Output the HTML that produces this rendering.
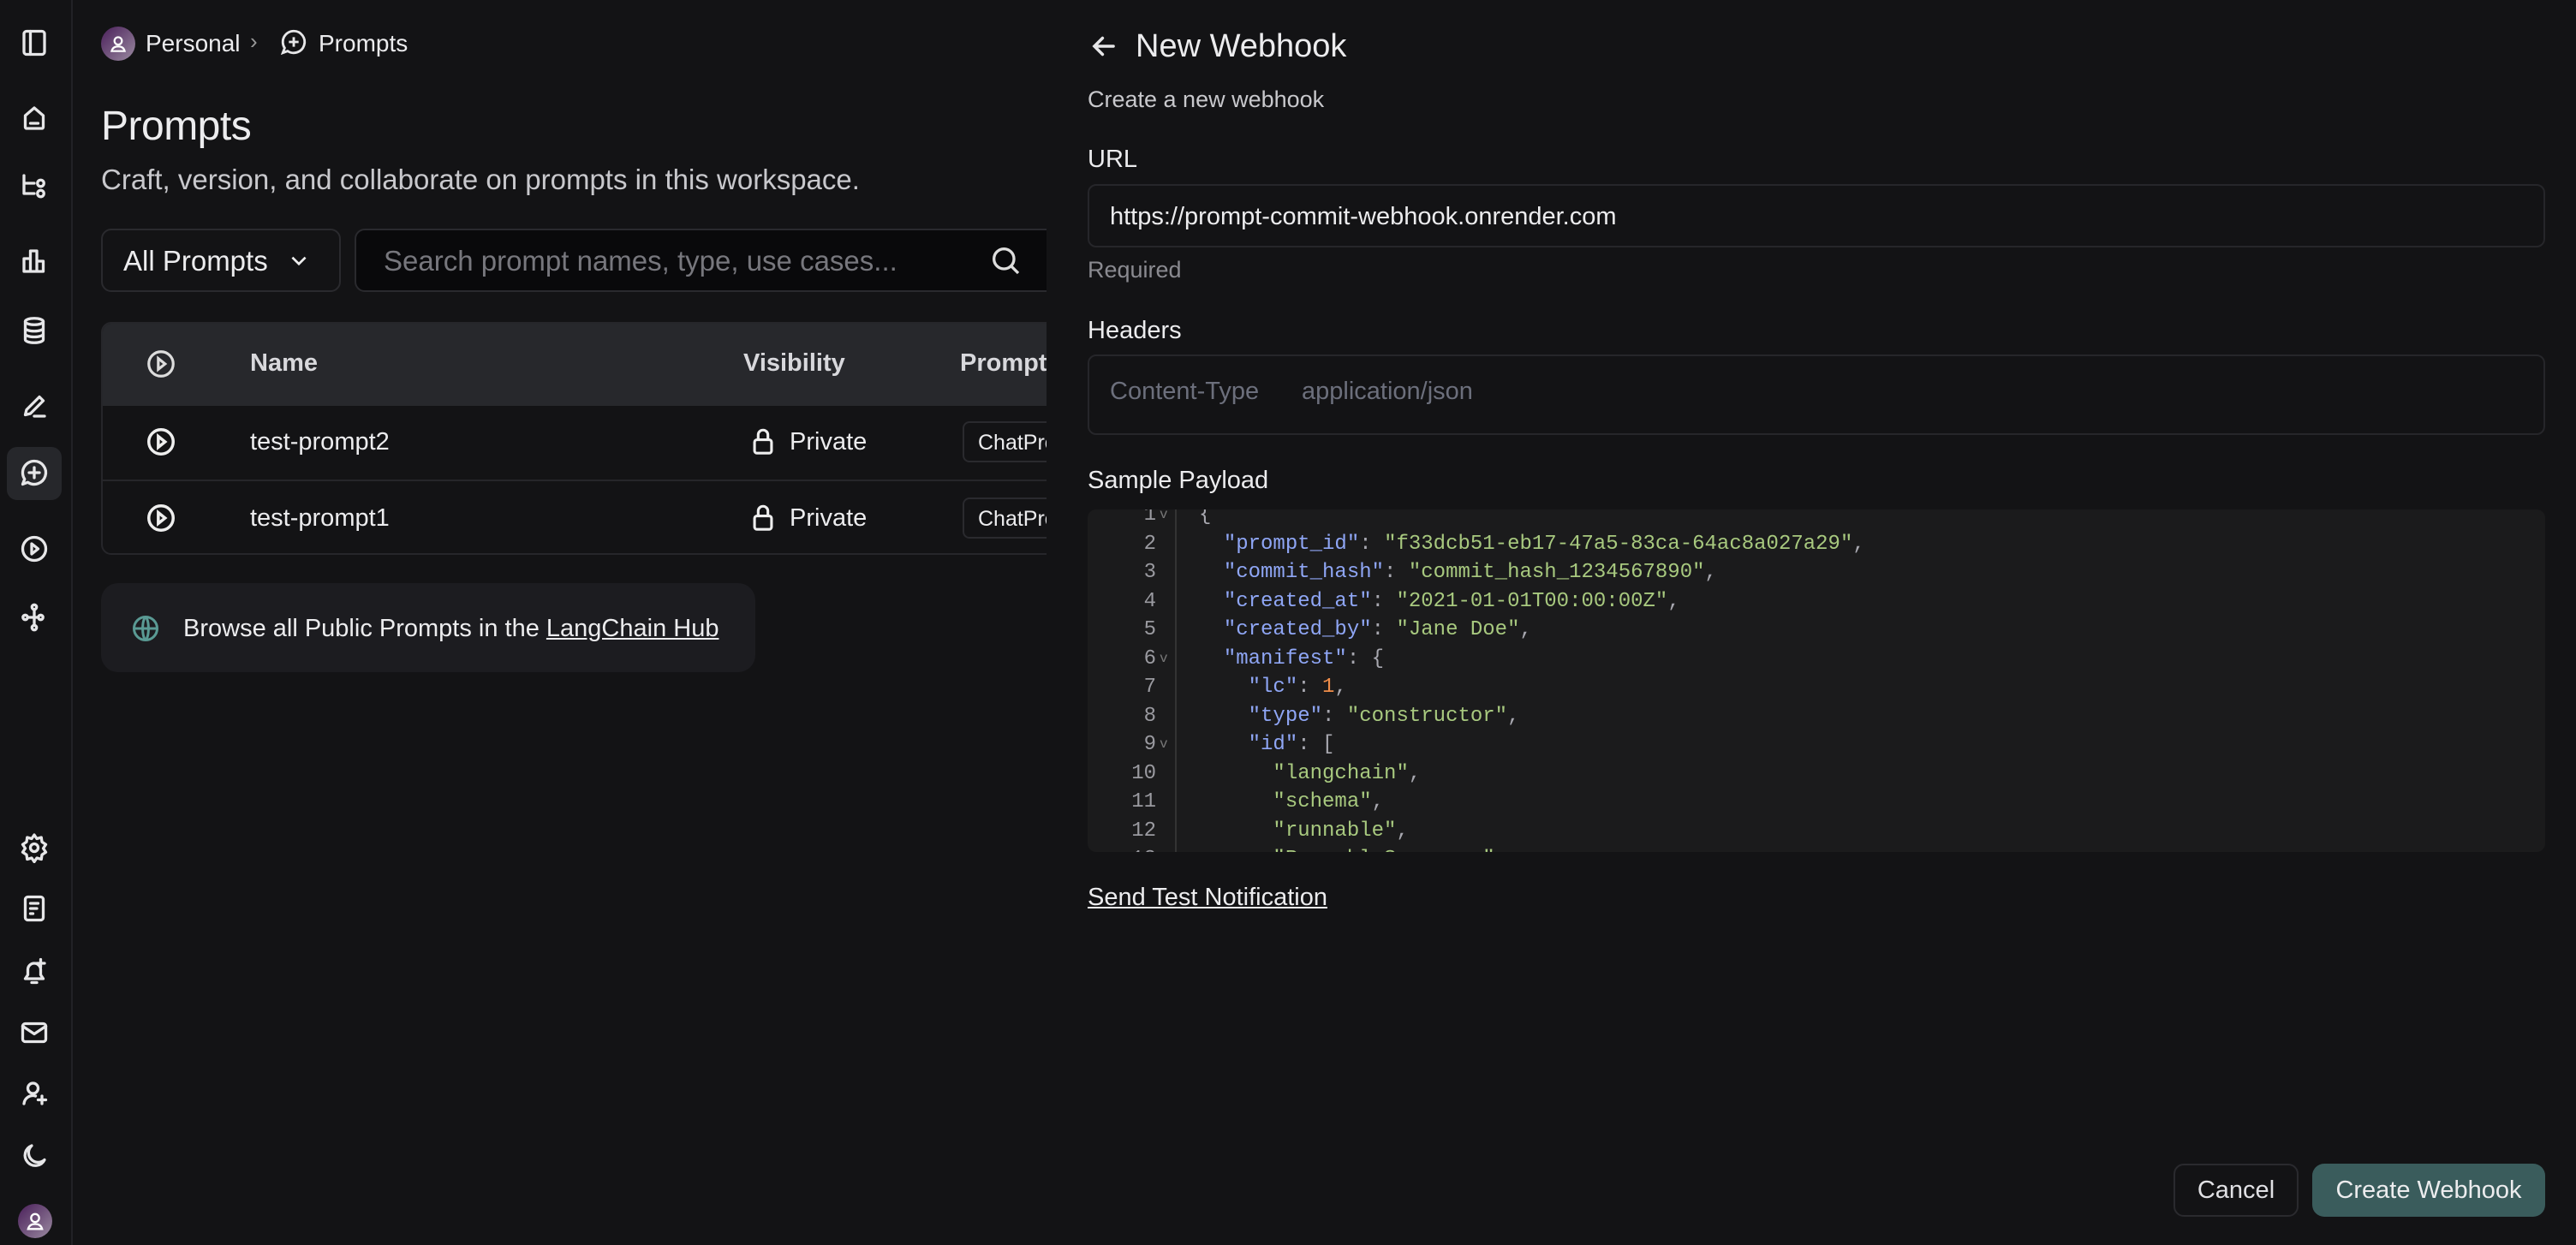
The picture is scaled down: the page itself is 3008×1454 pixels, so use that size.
<!DOCTYPE html>
<html><head><meta charset="utf-8"><style>
*{margin:0;padding:0;box-sizing:border-box}
body{width:3008px;height:1454px;background:#131315;color:#ececee;font-family:"Liberation Sans",sans-serif;position:relative;overflow:hidden}
.a{position:absolute}
.ic{position:absolute;left:22px;width:36px;height:36px;fill:none;stroke:#e6e6e8;stroke-width:2.2;stroke-linecap:round;stroke-linejoin:round}
.mono{font-family:"Liberation Mono",monospace;font-size:24px;white-space:pre}
.k{color:#8fa6f5}.s{color:#a8c97f}.p{color:#a8a8b0}.n{color:#f08d49}
</style></head><body>
<!-- sidebar -->
<div class="a" style="left:0;top:0;width:85px;height:1454px;border-right:2px solid #222226"></div>
<svg class="ic" style="top:32px" viewBox="0 0 24 24"><rect x="4" y="3" width="16" height="18" rx="2"/><path d="M9 3v18"/></svg>
<svg class="ic" style="top:120px" viewBox="0 0 24 24"><path d="M5 10l7-6 7 6v9a1 1 0 0 1-1 1H6a1 1 0 0 1-1-1z"/><path d="M9 16h6"/></svg>
<svg class="ic" style="top:199px" viewBox="0 0 24 24"><path d="M4 4v14h8M4 10h8"/><circle cx="17" cy="10" r="2.5"/><circle cx="17" cy="18" r="2.5"/></svg>
<svg class="ic" style="top:287px" viewBox="0 0 24 24"><path d="M4 20V10h5v10M9 20V4h5v16M14 20v-8h5v8H4"/></svg>
<svg class="ic" style="top:368px" viewBox="0 0 24 24"><ellipse cx="12" cy="5" rx="7" ry="2.5"/><path d="M5 5v14c0 1.4 3 2.5 7 2.5s7-1.1 7-2.5V5M5 10c0 1.4 3 2.5 7 2.5s7-1.1 7-2.5M5 14.5c0 1.4 3 2.5 7 2.5s7-1.1 7-2.5"/></svg>
<svg class="ic" style="top:456px" viewBox="0 0 24 24"><path d="M5 19l1-4L16 5l3 3L9 18zM12 20h8"/></svg>
<div class="a" style="left:8px;top:522px;width:64px;height:62px;border-radius:12px;background:#26272b"></div>
<svg class="ic" style="top:534px" viewBox="0 0 24 24"><path d="M12 3a9 9 0 1 1-5 16.5L3 21l1.5-4A9 9 0 0 1 12 3z"/><path d="M12 8v8M8 12h8"/></svg>
<svg class="ic" style="top:623px" viewBox="0 0 24 24"><circle cx="12" cy="12" r="9"/><path d="M10 8l5 4-5 4z"/></svg>
<svg class="ic" style="top:703px" viewBox="0 0 24 24"><circle cx="12" cy="4" r="1.8"/><circle cx="12" cy="20" r="1.8"/><circle cx="5" cy="12" r="1.8"/><circle cx="17" cy="12" r="1.8"/><path d="M12 6v12M7 12h8"/></svg>
<svg class="ic" style="top:972px" viewBox="0 0 24 24"><circle cx="12" cy="12" r="3"/><path d="M12 2l2 3 3.5-1 .5 3.5 3 2-2 3 2 3-3 2-.5 3.5-3.5-1-2 3-2-3-3.5 1-.5-3.5-3-2 2-3-2-3 3-2 .5-3.5 3.5 1z"/></svg>
<svg class="ic" style="top:1043px" viewBox="0 0 24 24"><rect x="5" y="3" width="14" height="18" rx="2"/><path d="M9 8h6M9 12h5M9 16h2"/></svg>
<svg class="ic" style="top:1116px" viewBox="0 0 24 24"><path d="M5 18h14l-2-3v-4a5 5 0 0 0-5-5 5 5 0 0 0-5 5v4zM10 21h4M17 3v6M14 6h6"/></svg>
<svg class="ic" style="top:1188px" viewBox="0 0 24 24"><rect x="3" y="5" width="18" height="14" rx="2"/><path d="M3 7l9 6 9-6"/></svg>
<svg class="ic" style="top:1259px" viewBox="0 0 24 24"><circle cx="11" cy="8" r="4"/><path d="M4 20a7 7 0 0 1 9-6M18 14v6M15 17h6"/></svg>
<svg class="ic" style="top:1332px" viewBox="0 0 24 24"><path d="M20 15A8 8 0 1 1 10 4a7 7 0 0 0 10 11z"/></svg>
<div class="a" style="left:21px;top:1406px;width:40px;height:40px;border-radius:50%;background:linear-gradient(135deg,#4a1f5a,#9a8aa0)"></div>
<svg class="a" style="left:27px;top:1412px;width:28px;height:28px;fill:none;stroke:#fff;stroke-width:2" viewBox="0 0 24 24"><circle cx="12" cy="9" r="4"/><path d="M5 20c1-4 4-5 7-5s6 1 7 5z"/></svg>

<!-- left content -->
<div class="a" style="left:118px;top:31px;width:40px;height:40px;border-radius:50%;background:linear-gradient(135deg,#4a1f5a,#9a8aa0)"></div>
<svg class="a" style="left:125px;top:38px;width:26px;height:26px;fill:none;stroke:#fff;stroke-width:2" viewBox="0 0 24 24"><circle cx="12" cy="9" r="4"/><path d="M5 20c1-4 4-5 7-5s6 1 7 5z"/></svg>
<div class="a" style="left:170px;top:35px;font-size:28px">Personal</div>
<div class="a" style="left:292px;top:33px;font-size:26px;color:#999">›</div>
<svg class="a" style="left:326px;top:32px;width:34px;height:34px;fill:none;stroke:#e6e6e8;stroke-width:2" viewBox="0 0 24 24"><path d="M12 3a9 9 0 1 1-5 16.5L3 21l1.5-4A9 9 0 0 1 12 3z"/><path d="M12 8v8M8 12h8"/></svg>
<div class="a" style="left:372px;top:35px;font-size:28px">Prompts</div>
<div class="a" style="left:118px;top:120px;font-size:48px;font-weight:500;letter-spacing:-0.5px">Prompts</div>
<div class="a" style="left:118px;top:191px;font-size:33px;color:#c8c8cc">Craft, version, and collaborate on prompts in this workspace.</div>
<div class="a" style="left:118px;top:267px;width:280px;height:74px;border:2px solid #2a2a2e;border-radius:12px"></div>
<div class="a" style="left:144px;top:286px;font-size:33px">All Prompts</div>
<svg class="a" style="left:334px;top:292px;width:30px;height:26px;fill:none;stroke:#eee;stroke-width:2.5" viewBox="0 0 24 24"><path d="M5 8l7 7 7-7"/></svg>
<div class="a" style="left:414px;top:267px;width:830px;height:74px;border:2px solid #2a2a2e;border-radius:12px;background:#09090b"></div>
<div class="a" style="left:448px;top:286px;font-size:33px;color:#77777d">Search prompt names, type, use cases...</div>
<svg class="a" style="left:1154px;top:284px;width:40px;height:40px;fill:none;stroke:#ddd;stroke-width:2" viewBox="0 0 24 24"><circle cx="11" cy="11" r="7"/><path d="M16 16l5 5"/></svg>
<div class="a" style="left:118px;top:376px;width:1200px;height:272px;border:2px solid #26262a;border-radius:12px;overflow:hidden">
 <div style="height:96px;background:#27282c"></div>
 <div style="height:88px;border-bottom:2px solid #26262a"></div>
</div>
<svg class="a" style="left:169px;top:406px;width:38px;height:38px;fill:none;stroke:#ddd;stroke-width:2" viewBox="0 0 24 24"><circle cx="12" cy="12" r="9"/><path d="M10 8l5 4-5 4z"/></svg>
<svg class="a" style="left:169px;top:497px;width:38px;height:38px;fill:none;stroke:#eee;stroke-width:2.2" viewBox="0 0 24 24"><circle cx="12" cy="12" r="9"/><path d="M10 8l5 4-5 4z"/></svg>
<svg class="a" style="left:169px;top:586px;width:38px;height:38px;fill:none;stroke:#eee;stroke-width:2.2" viewBox="0 0 24 24"><circle cx="12" cy="12" r="9"/><path d="M10 8l5 4-5 4z"/></svg>
<div class="a" style="left:292px;top:408px;font-size:29px;font-weight:bold;color:#d8d8dc">Name</div>
<div class="a" style="left:868px;top:408px;font-size:29px;font-weight:bold;color:#d8d8dc">Visibility</div>
<div class="a" style="left:1121px;top:408px;font-size:29px;font-weight:bold;color:#d8d8dc">Prompt Type</div>
<div class="a" style="left:292px;top:500px;font-size:29px">test-prompt2</div>
<div class="a" style="left:292px;top:589px;font-size:29px">test-prompt1</div>
<svg class="a" style="left:874px;top:496px;width:34px;height:38px;fill:none;stroke:#eee;stroke-width:2.2" viewBox="0 0 24 24"><rect x="5" y="11" width="14" height="11" rx="2"/><path d="M8 11V7a4 4 0 0 1 8 0v4"/></svg>
<svg class="a" style="left:874px;top:585px;width:34px;height:38px;fill:none;stroke:#eee;stroke-width:2.2" viewBox="0 0 24 24"><rect x="5" y="11" width="14" height="11" rx="2"/><path d="M8 11V7a4 4 0 0 1 8 0v4"/></svg>
<div class="a" style="left:922px;top:500px;font-size:29px">Private</div>
<div class="a" style="left:922px;top:589px;font-size:29px">Private</div>
<div class="a" style="left:1124px;top:492px;width:150px;height:48px;border:2px solid #2a2a2e;border-radius:8px;font-size:25px;padding:9px 16px">ChatPrompt</div>
<div class="a" style="left:1124px;top:581px;width:150px;height:48px;border:2px solid #2a2a2e;border-radius:8px;font-size:25px;padding:9px 16px">ChatPrompt</div>
<div class="a" style="left:118px;top:681px;width:764px;height:104px;border-radius:20px;background:#1c1c20"></div>
<svg class="a" style="left:152px;top:716px;width:36px;height:36px;fill:none;stroke:#5a9a94;stroke-width:2" viewBox="0 0 24 24"><circle cx="12" cy="12" r="9"/><path d="M3 12h18M12 3c3 3 3 15 0 18M12 3c-3 3-3 15 0 18"/></svg>
<div class="a" style="left:214px;top:718px;font-size:29px">Browse all Public Prompts in the <u>LangChain Hub</u></div>

<!-- right panel -->
<div class="a" style="left:1222px;top:0;width:1786px;height:1454px;background:#131315"></div>
<svg class="a" style="left:1270px;top:35px;width:38px;height:38px;fill:none;stroke:#e6e6e8;stroke-width:2.2;stroke-linecap:round" viewBox="0 0 24 24"><path d="M19 12H5M11 6l-6 6 6 6"/></svg>
<div class="a" style="left:1326px;top:33px;font-size:38px">New Webhook</div>
<div class="a" style="left:1270px;top:101px;font-size:27px;color:#c8c8cc">Create a new webhook</div>
<div class="a" style="left:1270px;top:170px;font-size:29px;font-weight:500">URL</div>
<div class="a" style="left:1270px;top:215px;width:1702px;height:74px;border:2px solid #26262a;border-radius:10px"></div>
<div class="a" style="left:1296px;top:237px;font-size:29px">https://prompt-commit-webhook.onrender.com</div>
<div class="a" style="left:1270px;top:300px;font-size:27px;color:#8a8a90">Required</div>
<div class="a" style="left:1270px;top:370px;font-size:29px;font-weight:500">Headers</div>
<div class="a" style="left:1270px;top:414px;width:1702px;height:94px;border:2px solid #26262a;border-radius:10px"></div>
<div class="a" style="left:1296px;top:441px;font-size:29px;color:#6c6f7c">Content-Type</div>
<div class="a" style="left:1520px;top:441px;font-size:29px;color:#6c6f7c">application/json</div>
<div class="a" style="left:1270px;top:545px;font-size:29px;font-weight:500">Sample Payload</div>
<div class="a" style="left:1270px;top:595px;width:1702px;height:400px;border-radius:10px;background:#1b1b1c;overflow:hidden">
 <div class="a" style="left:102px;top:0;width:2px;height:400px;background:#333"></div>
 <div class="a mono" style="left:0;top:-10px;width:80px;text-align:right;color:#9a9aa0;line-height:33.5px">1
2
3
4
5
6
7
8
9
10
11
12
13</div>
<div class="a mono" style="left:84px;top:-10px;color:#777;font-size:16px;line-height:33.5px">v




v


v</div>
 <div class="a mono" style="left:130px;top:-10px;line-height:33.5px"><span class="p">{</span>
  <span class="k">"prompt_id"</span><span class="p">:</span> <span class="s">"f33dcb51-eb17-47a5-83ca-64ac8a027a29"</span><span class="p">,</span>
  <span class="k">"commit_hash"</span><span class="p">:</span> <span class="s">"commit_hash_1234567890"</span><span class="p">,</span>
  <span class="k">"created_at"</span><span class="p">:</span> <span class="s">"2021-01-01T00:00:00Z"</span><span class="p">,</span>
  <span class="k">"created_by"</span><span class="p">:</span> <span class="s">"Jane Doe"</span><span class="p">,</span>
  <span class="k">"manifest"</span><span class="p">: {</span>
    <span class="k">"lc"</span><span class="p">:</span> <span class="n">1</span><span class="p">,</span>
    <span class="k">"type"</span><span class="p">:</span> <span class="s">"constructor"</span><span class="p">,</span>
    <span class="k">"id"</span><span class="p">: [</span>
      <span class="s">"langchain"</span><span class="p">,</span>
      <span class="s">"schema"</span><span class="p">,</span>
      <span class="s">"runnable"</span><span class="p">,</span>
      <span class="s">"RunnableSequence"</span></div>
</div>
<div class="a" style="left:1270px;top:1032px;font-size:29px;text-decoration:underline;font-weight:500">Send Test Notification</div>
<div class="a" style="left:2538px;top:1359px;width:146px;height:62px;border:2px solid #2a2a2e;border-radius:12px;font-size:29px;text-align:center;line-height:58px;color:#e0e0e4">Cancel</div>
<div class="a" style="left:2700px;top:1359px;width:272px;height:62px;border-radius:14px;background:#3a5c5c;font-size:29px;text-align:center;line-height:62px;font-weight:500">Create Webhook</div>
</body></html>
